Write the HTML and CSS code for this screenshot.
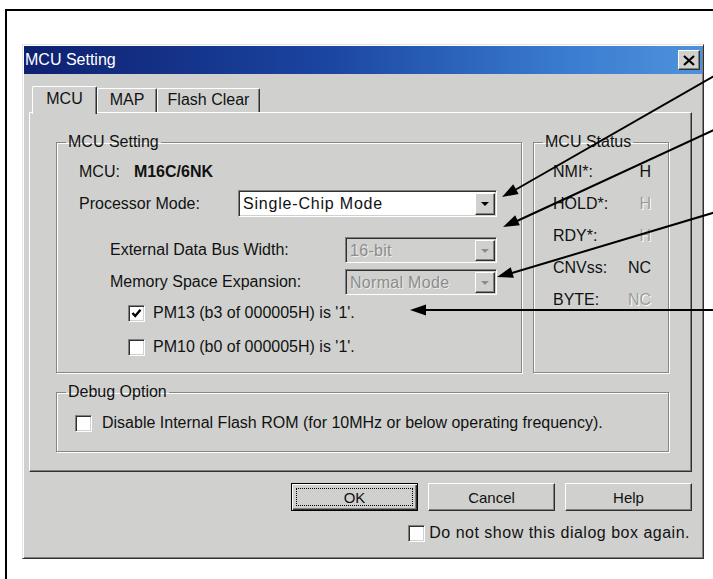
FILE: index.html
```html
<!DOCTYPE html>
<html>
<head>
    <meta charset="UTF-8">
    <title>MCU Setting</title>
    <link rel="stylesheet" href="styles.css">
</head>
<body>
<div class="page">
    <div class="caption"><span>Setting</span></div>
    <div class="frame">
        <div class="dialog">
            <div class="titlebar">
                <span class="title">MCU Setting</span>
                <span class="close">
                    <svg width="12" height="11" viewBox="0 0 12 11"><path d="M1 1 L11 10 M11 1 L1 10" stroke="#000" stroke-width="2.2"/></svg>
                </span>
            </div>
            <div class="dlg-body">
                <div class="tabs">
                    <div class="tab active">MCU</div>
                    <div class="tab tab-map">MAP</div>
                    <div class="tab tab-flash">Flash Clear</div>
                </div>
                <div class="pane">
                    <div class="top-row">
                        <fieldset class="group setting">
                            <legend>MCU Setting</legend>
                            <div class="setting-body">
                                <div class="row mcu-row"><span>MCU:</span><b>M16C/6NK</b></div>
                                <div class="row proc-row">
                                    <span class="lbl">Processor Mode:</span>
                                    <div class="combo wide">
                                        <span class="combo-text">Single-Chip Mode</span>
                                        <span class="drop"><i></i></span>
                                    </div>
                                </div>
                                <div class="row sub-row bus-row">
                                    <span class="lbl">External Data Bus Width:</span>
                                    <div class="combo off">
                                        <span class="combo-text">16-bit</span>
                                        <span class="drop"><i></i></span>
                                    </div>
                                </div>
                                <div class="row sub-row mem-row">
                                    <span class="lbl">Memory Space Expansion:</span>
                                    <div class="combo off">
                                        <span class="combo-text">Normal Mode</span>
                                        <span class="drop"><i></i></span>
                                    </div>
                                </div>
                                <div class="row check-row pm13">
                                    <span class="box">
                                        <svg width="11" height="11" viewBox="0 0 11 11"><path d="M1.5 5 L4.2 8 L9.5 1.8" fill="none" stroke="#000" stroke-width="2.4"/></svg>
                                    </span>
                                    <span>PM13 (b3 of 000005H) is '1'.</span>
                                </div>
                                <div class="row check-row pm10">
                                    <span class="box"></span>
                                    <span>PM10 (b0 of 000005H) is '1'.</span>
                                </div>
                            </div>
                        </fieldset>
                        <fieldset class="group status">
                            <legend>MCU Status</legend>
                            <div class="status-body">
                                <div class="st-row"><span>NMI*:</span><span>H</span></div>
                                <div class="st-row"><span>HOLD*:</span><span class="dim">H</span></div>
                                <div class="st-row"><span>RDY*:</span><span class="dim">H</span></div>
                                <div class="st-row"><span>CNVss:</span><span>NC</span></div>
                                <div class="st-row"><span>BYTE:</span><span class="dim">NC</span></div>
                            </div>
                        </fieldset>
                    </div>
                    <fieldset class="group debug">
                        <legend>Debug Option</legend>
                        <div class="row debug-row">
                            <span class="box"></span>
                            <span>Disable Internal Flash ROM (for 10MHz or below operating frequency).</span>
                        </div>
                    </fieldset>
                </div>
                <div class="buttons">
                    <button class="btn default">OK</button>
                    <button class="btn">Cancel</button>
                    <button class="btn">Help</button>
                </div>
                <div class="noshow">
                    <span class="box"></span>
                    <span>Do not show this dialog box again.</span>
                </div>
            </div>
        </div>
    </div>

    <!-- callout arrows drawn over the dialog -->
    <svg class="arrows" width="713" height="579" viewBox="0 0 713 579">
        <g stroke="#000" stroke-width="2" fill="none">
            <line x1="716" y1="75" x2="515" y2="190"/>
            <line x1="716" y1="129" x2="517" y2="221"/>
            <line x1="716" y1="212" x2="512" y2="273"/>
            <line x1="716" y1="310" x2="425" y2="310"/>
        </g>
        <g fill="#000">
            <polygon points="502,197 518.6,193.9 513.2,184.3"/>
            <polygon points="503,227 519.8,225.3 515.2,215.3"/>
            <polygon points="497,277 513.9,277.8 510.7,267.2"/>
            <polygon points="410,310 426,315.5 426,304.5"/>
        </g>
    </svg>
</div>
</body>
</html>
```

FILE: styles.css
```css
body {
    margin: 0;
    background-color: #fff;
    font-family: "Liberation Sans", Arial, sans-serif;
    color: #111;
}
.page {
    position: relative;
    width: 713px;
    height: 579px;
    overflow: hidden;
}
.caption {
    height: 9px;
    overflow: hidden;
    font-family: "Liberation Serif", serif;
    font-size: 20px;
    line-height: 20px;
}
.caption span {
    display: block;
    margin-top: -22px;
    padding-left: 128px;
}
.frame {
    box-sizing: border-box;
    height: 570px;
    margin-left: 5px;
    border-top: 2px solid #000;
    border-left: 2px solid #000;
    padding: 33px 0 0 15px;
}
.dialog {
    box-sizing: border-box;
    width: 682px;
    height: 515px;
    padding: 1px;
    background-color: #d0d1ce;
    border: 1px solid;
    border-color: #e4e4e4 #303030 #303030 #e4e4e4;
    box-shadow: inset 1px 1px 0 #fff, inset -1px -1px 0 #808080;
}
.titlebar {
    height: 28px;
    display: flex;
    align-items: center;
    justify-content: space-between;
    padding: 0 2px 0 1px;
    background: linear-gradient(to right, #0e2070 0%, #1b46a2 45%, #3a7cd0 80%, #4f92da 100%);
    color: #fff;
    font-size: 16px;
}
.close {
    box-sizing: border-box;
    width: 22px;
    height: 20px;
    display: flex;
    align-items: center;
    justify-content: center;
    background-color: #d0d1ce;
    border: 1px solid;
    border-color: #fff #303030 #303030 #fff;
    box-shadow: inset -1px -1px 0 #808080;
}
.dlg-body {
    padding-top: 12px;
}
.tabs {
    display: flex;
    align-items: flex-end;
    height: 26px;
    margin-left: 8px;
    position: relative;
    z-index: 1;
}
.tab {
    box-sizing: border-box;
    height: 24px;
    width: 60px;
    text-align: center;
    font-size: 16px;
    line-height: 22px;
    background-color: #d0d1ce;
    border-top: 1px solid #fff;
    border-left: 1px solid #fff;
    border-right: 1px solid #303030;
    border-radius: 2px 2px 0 0;
    box-shadow: inset -1px 0 0 #808080;
}
.tab.active {
    width: 65px;
    height: 28px;
    margin-bottom: -2px;
    line-height: 24px;
}
.tab-flash {
    width: 103px;
}
.pane {
    box-sizing: border-box;
    width: 663px;
    height: 360px;
    margin-left: 5px;
    padding: 21px 22px 0 26px;
    border: 1px solid;
    border-color: #fff #303030 #303030 #fff;
    box-shadow: inset -1px -1px 0 #808080;
}
.top-row {
    display: flex;
    gap: 11px;
    height: 239px;
}
.group {
    box-sizing: border-box;
    margin: 0;
    padding: 0;
    min-width: 0;
    border: 1px solid #868686;
    box-shadow: 1px 1px 0 #fff, inset 1px 1px 0 #fff;
    font-size: 16px;
}
.group legend {
    margin-left: 9px;
    padding: 0 2px;
    line-height: 16px;
    font-size: 16px;
}
.setting {
    width: 466px;
    height: 239px;
}
.setting-body {
    padding: 0 24px 0 22px;
}
.status {
    flex: 1;
    height: 239px;
}
.row {
    display: flex;
    align-items: center;
}
.mcu-row {
    margin-top: 12px;
    height: 20px;
}
.mcu-row b {
    margin-left: 14px;
}
.proc-row {
    margin-top: 8px;
    height: 27px;
}
.proc-row .lbl {
    width: 159px;
}
.sub-row {
    height: 26px;
    padding-left: 31px;
}
.sub-row .lbl {
    width: 235px;
}
.bus-row {
    margin-top: 20px;
}
.mem-row {
    margin-top: 6px;
}
.combo {
    box-sizing: border-box;
    display: flex;
    width: 152px;
    height: 26px;
    background-color: #d0d1ce;
    border: 1px solid;
    border-color: #808080 #fff #fff #808080;
    box-shadow: inset 1px 1px 0 #303030, inset -1px -1px 0 #d0d1ce;
}
.combo.wide {
    width: 259px;
    height: 27px;
    background-color: #fff;
}
.combo-text {
    flex: 1;
    padding: 1px 0 0 4px;
    line-height: 23px;
    font-size: 16px;
    letter-spacing: 0.8px;
    white-space: nowrap;
    overflow: hidden;
}
.combo.off .combo-text {
    color: #8c8c8c;
    text-shadow: 1px 1px 0 #eee;
    letter-spacing: 0.3px;
}
.drop {
    box-sizing: border-box;
    width: 20px;
    margin: 2px 1px 1px 0;
    display: flex;
    align-items: center;
    justify-content: center;
    background-color: #d0d1ce;
    border: 1px solid;
    border-color: #fff #303030 #303030 #fff;
    box-shadow: inset -1px -1px 0 #808080;
}
.drop i {
    width: 0;
    height: 0;
    border-left: 4px solid transparent;
    border-right: 4px solid transparent;
    border-top: 4px solid #000;
}
.combo.off .drop i {
    border-top-color: #8c8c8c;
}
.check-row {
    height: 20px;
    padding-left: 49px;
    gap: 8px;
}
.pm13 {
    margin-top: 8px;
}
.pm10 {
    margin-top: 14px;
}
.box {
    box-sizing: border-box;
    width: 17px;
    height: 17px;
    flex: none;
    display: flex;
    align-items: center;
    justify-content: center;
    background-color: #fff;
    border: 1px solid;
    border-color: #808080 #fff #fff #808080;
    box-shadow: inset 1px 1px 0 #303030, inset -1px -1px 0 #d0d1ce;
}
.status-body {
    padding: 6px 17px 0 19px;
}
.st-row {
    height: 32px;
    display: flex;
    align-items: center;
    justify-content: space-between;
}
.dim {
    color: #9c9c9c;
    text-shadow: 1px 1px 0 #fff;
}
.debug {
    margin-top: 11px;
    height: 68px;
}
.debug-row {
    margin-top: 13px;
    height: 20px;
    gap: 10px;
    padding-left: 18px;
}
.buttons {
    display: flex;
    justify-content: flex-end;
    gap: 10px;
    margin-top: 11px;
    padding-right: 10px;
}
.btn {
    box-sizing: border-box;
    width: 127px;
    height: 28px;
    padding: 0;
    font-family: "Liberation Sans", Arial, sans-serif;
    font-size: 15px;
    color: #111;
    background-color: #d0d1ce;
    border: 1px solid;
    border-color: #fff #303030 #303030 #fff;
    box-shadow: inset -1px -1px 0 #808080;
}
.btn.default {
    border-color: #000;
    box-shadow: inset 1px 1px 0 #fff, inset -1px -1px 0 #303030, inset -2px -2px 0 #808080;
    outline: 1px dotted #000;
    outline-offset: -6px;
}
.noshow {
    display: flex;
    align-items: center;
    justify-content: flex-end;
    gap: 4px;
    margin-top: 13px;
    padding-right: 12px;
    height: 18px;
    font-size: 16px;
    letter-spacing: 0.5px;
}
.arrows {
    position: absolute;
    left: 0;
    top: 0;
    pointer-events: none;
}
```
